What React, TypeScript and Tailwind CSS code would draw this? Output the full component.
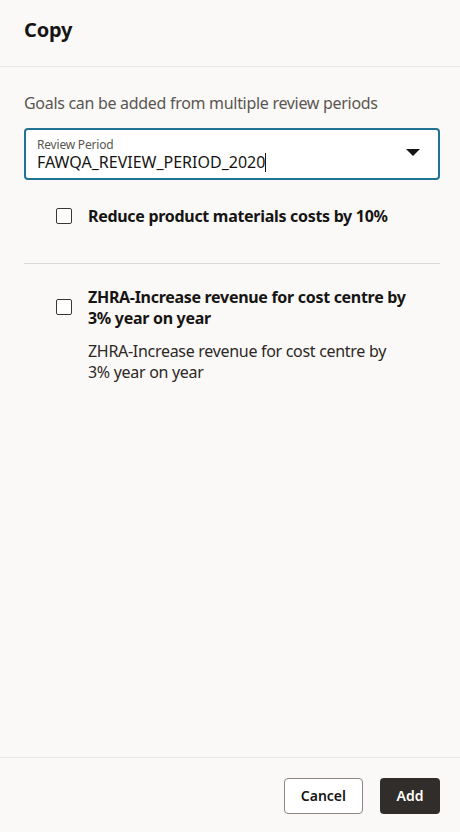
import React from "react";

export default function App() {
  return (
    <div
      className="w-[460px] h-[832px] bg-[#fbf9f8] flex flex-col text-[#161513]"
      style={{ fontFamily: '"Noto Sans", "Open Sans", sans-serif' }}
    >
      <div className="h-[67px] border-b border-[#e8e6e3] px-6 flex items-center">
        <h1 className="text-[20px] font-bold leading-none pb-[6px] tracking-[-0.2px]">Copy</h1>
      </div>
      <div className="flex-1 pl-6 pr-5 pt-[24px]">
        <p className="text-[16px] text-[#5a5652] leading-[24px] tracking-[-0.3px]">Goals can be added from multiple review periods</p>
        <div className="mt-[13px] h-[52px] bg-white border-2 border-[#227393] rounded-[4px] flex items-center pl-[11px] pr-[18px]">
          <div className="flex-1 flex flex-col pt-[2px]">
            <span className="text-[12px] text-[#5a5652] leading-[14px] tracking-[-0.2px]">Review Period</span>
            <span className="text-[16px] leading-[19px] mt-[1px] text-[#161513]">
              FAWQA_REVIEW_PERIOD_2020<span className="inline-block w-px h-[19px] bg-[#161513] align-middle -mt-[2px]"></span>
            </span>
          </div>
          <svg width="14" height="8" viewBox="0 0 14 8" className="mb-[2px]">
            <path d="M0 0 L14 0 L7 7 Z" fill="#161513" />
          </svg>
        </div>
        <div className="flex items-center pl-[32px] mt-[24px] h-[24px]">
          <div className="w-[16px] h-[16px] border-[1.5px] border-[#3a3632] rounded-[2px] bg-white"></div>
          <span className="ml-[16px] text-[16px] font-bold leading-[21px] tracking-[-0.3px]">Reduce product materials costs by 10%</span>
        </div>
        <div className="mt-[35px] border-t border-[#dcd9d5]"></div>
        <div className="flex pl-[32px] mt-[23px]">
          <div className="w-[16px] h-[16px] border-[1.5px] border-[#3a3632] rounded-[2px] bg-white mt-[12px] shrink-0"></div>
          <div className="ml-[16px] pr-[20px]">
            <div className="text-[16px] font-bold leading-[21px] tracking-[-0.3px]">ZHRA-Increase revenue for cost centre by 3% year on year</div>
            <div className="w-[310px] text-[16px] leading-[21px] mt-[12px] text-[#2b2825] tracking-[-0.3px]">ZHRA-Increase revenue for cost centre by 3% year on year</div>
          </div>
        </div>
      </div>
      <div className="h-[75px] border-t border-[#e8e6e3] flex items-center justify-end gap-[17px] px-5 pt-[1px]">
        <button className="h-[36px] px-[16px] border border-[#8a8784] rounded-[4px] bg-white text-[14px] font-semibold text-[#161513]">Cancel</button>
        <button className="h-[36px] w-[60px] rounded-[4px] bg-[#312d2a] text-white text-[14px] font-semibold">Add</button>
      </div>
    </div>
  );
}
